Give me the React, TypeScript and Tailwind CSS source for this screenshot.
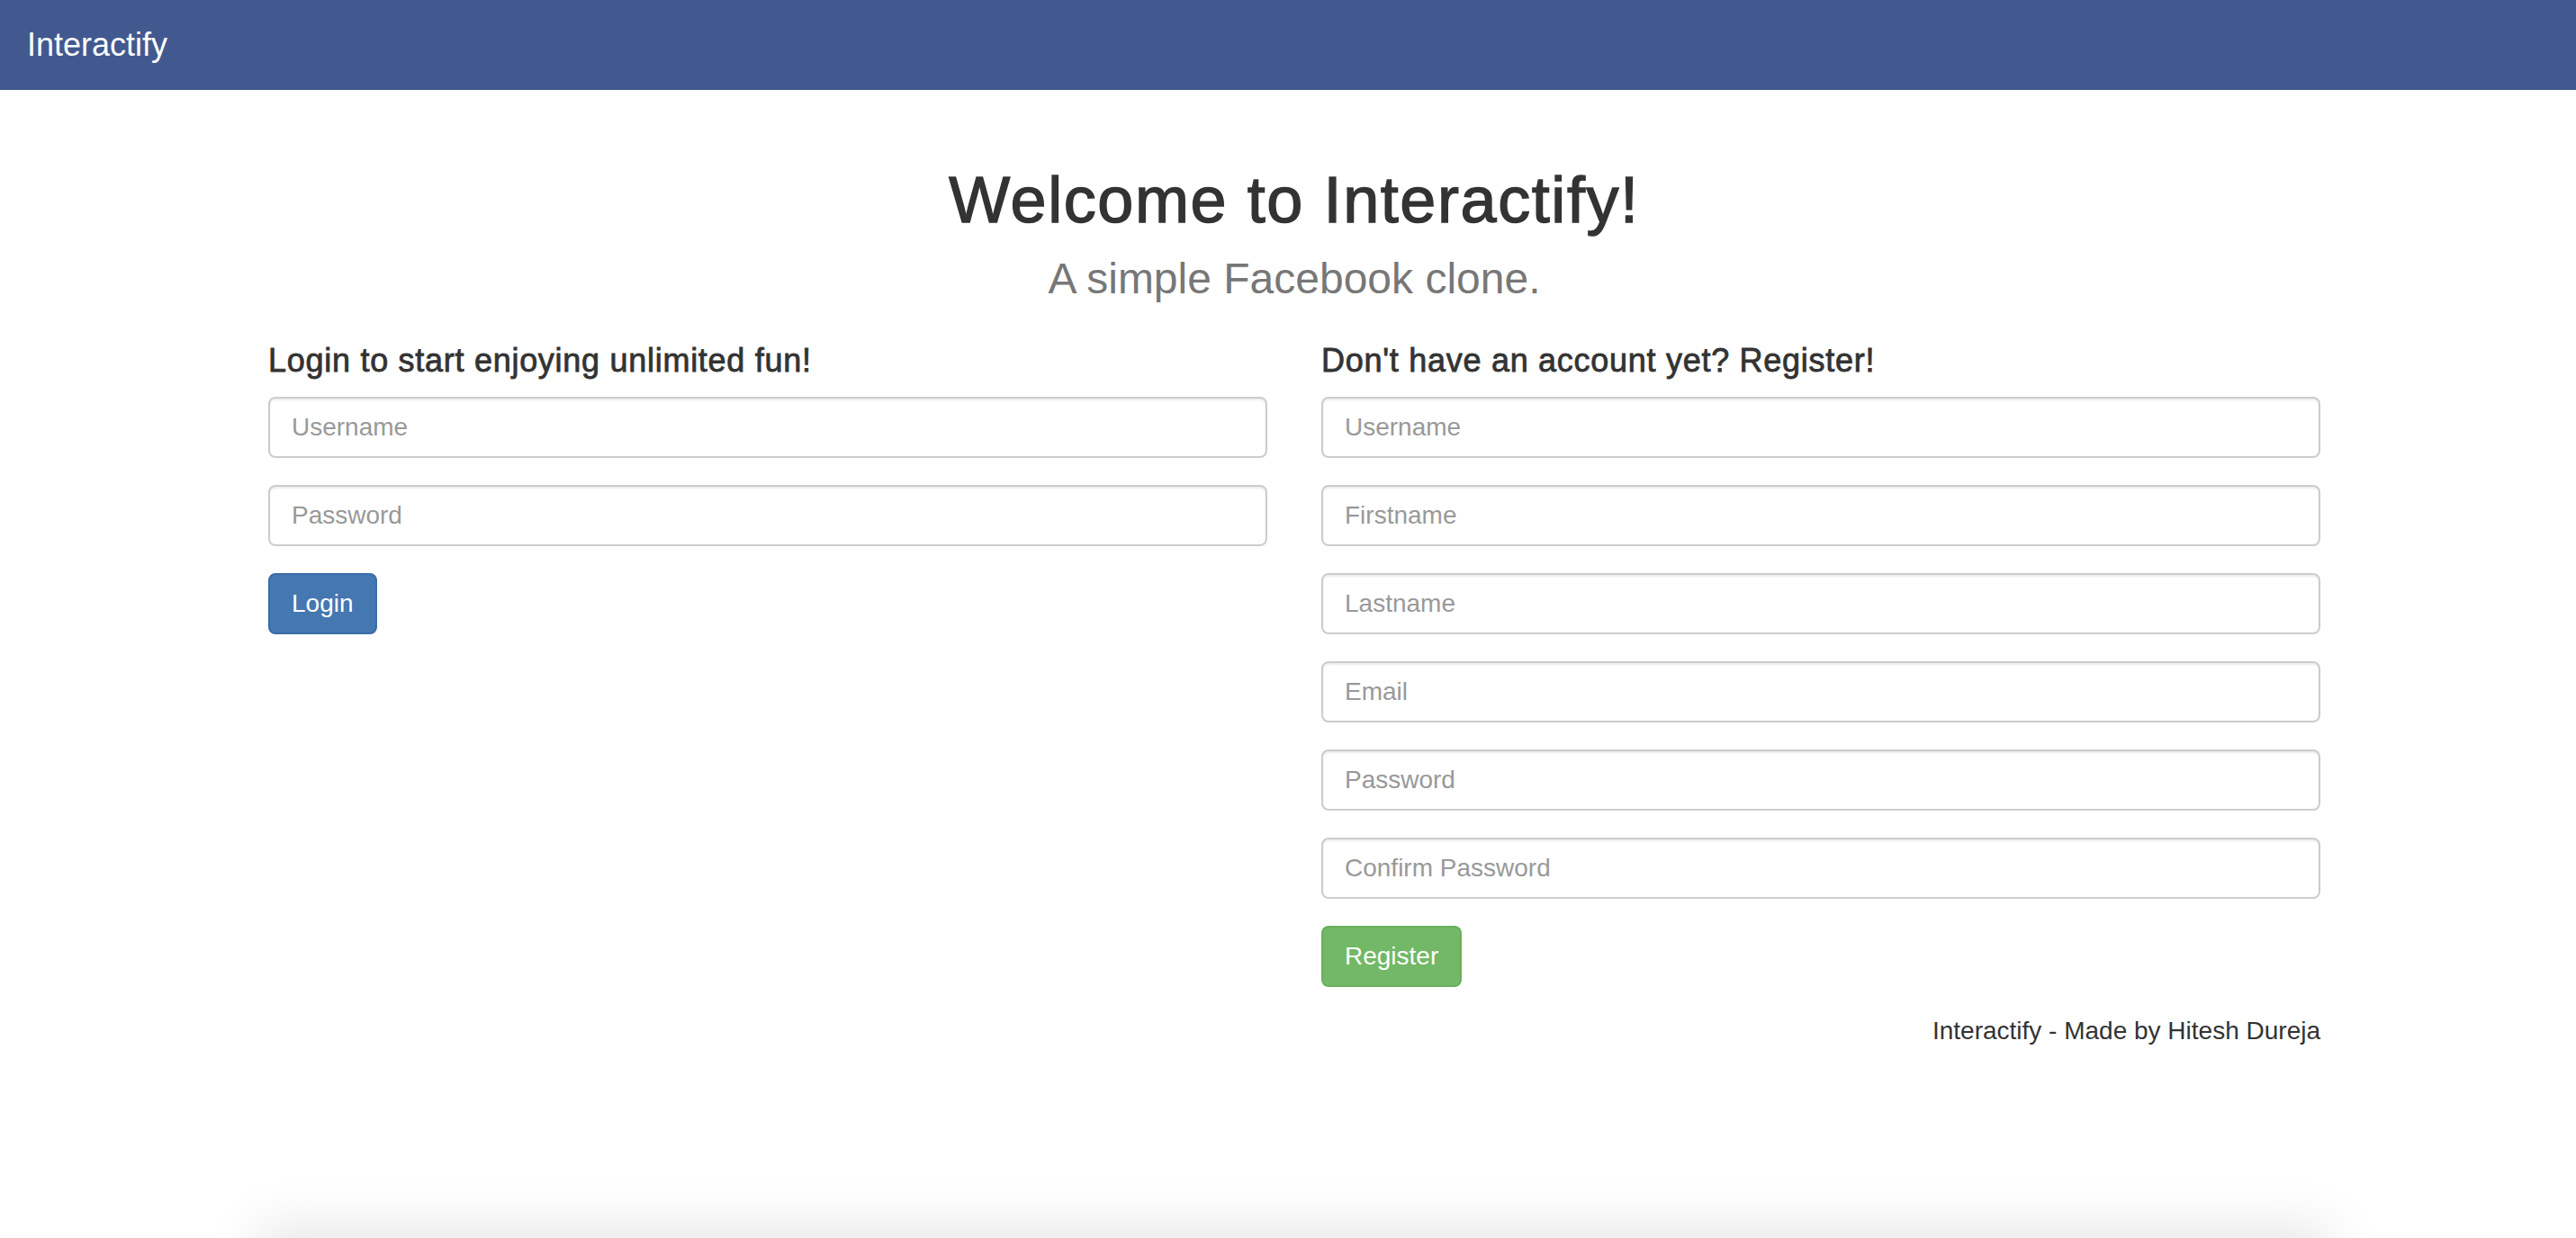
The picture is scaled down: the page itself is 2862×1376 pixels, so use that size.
import React from 'react'

const font = { fontFamily: '"Liberation Sans", Arial, sans-serif' }

const Field = ({ placeholder, type = 'text' }: { placeholder: string; type?: string }) => (
  <div className="mb-[30px]">
    <input
      type={type}
      placeholder={placeholder}
      className="block h-[68px] w-full rounded-[8px] border-2 border-[#cccccc] bg-white px-[24px] text-[28px] text-[#555555] shadow-[inset_0_2px_2px_rgba(0,0,0,0.075)] outline-none placeholder:text-[#999999]"
    />
  </div>
)

const loginFields = [
  { placeholder: 'Username' },
  { placeholder: 'Password', type: 'password' },
]

const registerFields = [
  { placeholder: 'Username' },
  { placeholder: 'Firstname' },
  { placeholder: 'Lastname' },
  { placeholder: 'Email', type: 'email' },
  { placeholder: 'Password', type: 'password' },
  { placeholder: 'Confirm Password', type: 'password' },
]

export default function App() {
  return (
    <div className="flex h-[1376px] flex-col overflow-hidden bg-white text-[#333333]" style={font}>
      <nav className="flex h-[100px] shrink-0 items-center bg-[#42598f] px-[30px]">
        <span className="text-[36px] leading-none text-white">Interactify</span>
      </nav>

      <div className="flex justify-center pl-[14px]">
        <main className="w-[2280px]">
          <h1 className="mt-[83px] text-center text-[72px] leading-[1.1] font-normal tracking-[0.022em] [-webkit-text-stroke:1.4px_#333333]">
            Welcome to Interactify!
          </h1>
          <p className="mt-[22px] text-center text-[48px] leading-[1.1] text-[#777777]">
            A simple Facebook clone.
          </p>

          <div className="mt-[44px] grid grid-cols-2 gap-[60px]">
            <form onSubmit={(e) => e.preventDefault()}>
              <h4 className="mb-[20px] text-[36px] leading-[1.1] tracking-[0.02em] [-webkit-text-stroke:0.8px_#333333]">
                Login to start enjoying unlimited fun!
              </h4>
              {loginFields.map((f) => (
                <Field key={f.placeholder} {...f} />
              ))}
              <button className="h-[68px] rounded-[8px] border-2 border-[#3a6ca6] bg-[#4577b1] px-[24px] text-[28px] text-white">
                Login
              </button>
            </form>

            <div>
              <form onSubmit={(e) => e.preventDefault()}>
                <h4 className="mb-[20px] text-[36px] leading-[1.1] tracking-[0.02em] [-webkit-text-stroke:0.8px_#333333]">
                  Don't have an account yet? Register!
                </h4>
                {registerFields.map((f) => (
                  <Field key={f.placeholder} {...f} />
                ))}
                <button className="h-[68px] rounded-[8px] border-2 border-[#68b05c] bg-[#72b866] px-[24px] text-[28px] text-white">
                  Register
                </button>
              </form>
              <p className="mt-[29px] text-right text-[28px] leading-[40px]">
                Interactify - Made by Hitesh Dureja
              </p>
            </div>
          </div>
        </main>
      </div>

      <div className="mt-auto flex h-[70px] shrink-0 justify-center overflow-hidden pl-[14px]">
        <div className="mt-[70px] h-[60px] w-[2280px] shadow-[0_0_60px_12px_rgba(0,0,0,0.1)]" />
      </div>
    </div>
  )
}
